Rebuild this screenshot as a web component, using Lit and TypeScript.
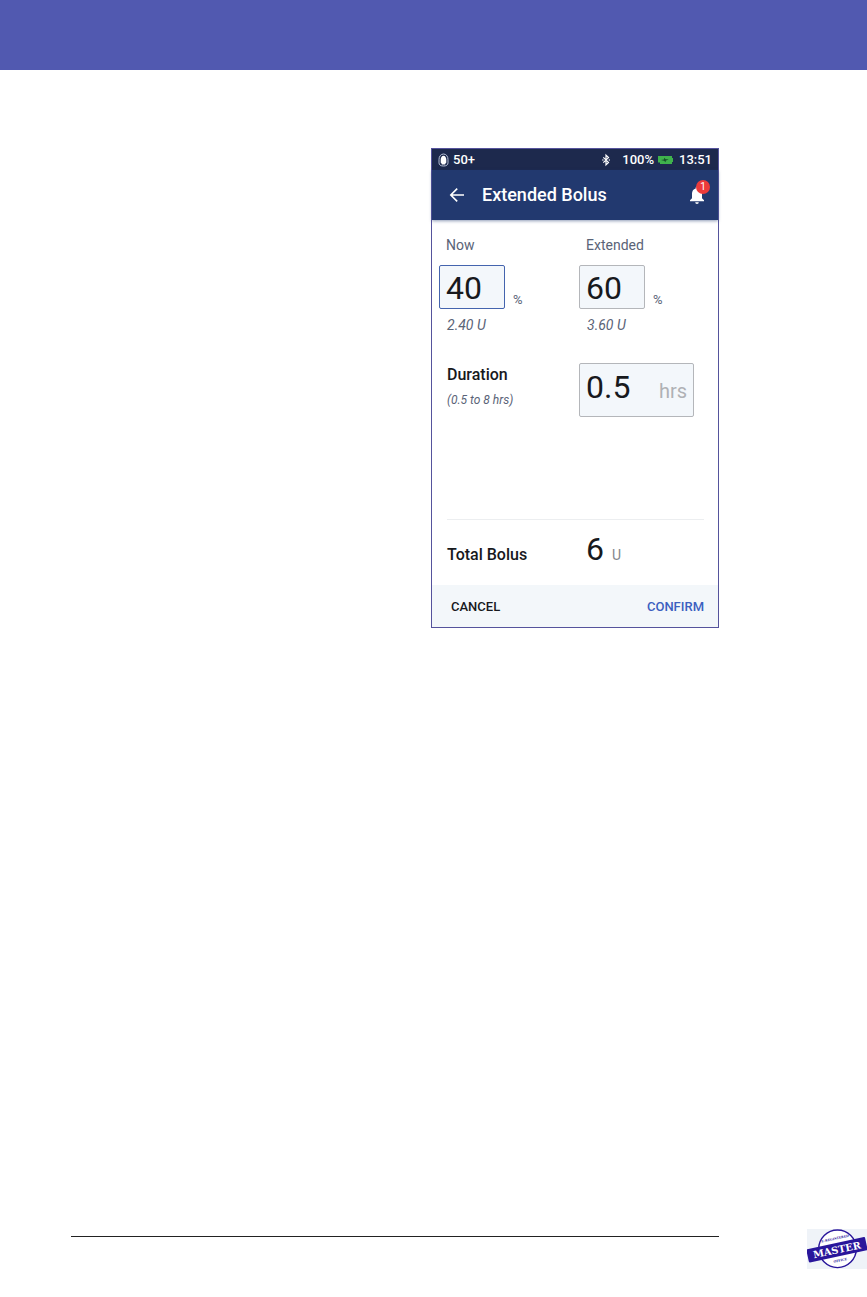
import { LitElement, html, css } from "lit";
import { customElement, property } from "lit/decorators.js";

@customElement("status-bar")
class StatusBar extends LitElement {
  static styles = css`
    :host {
      display: flex;
      align-items: center;
      height: 21px;
      padding: 0 6px;
      background: #1d294d;
      color: #fff;
      font-size: 13px;
      font-weight: 500;
      line-height: 20px;
    }
    .pod { width: 11px; height: 14px; margin-right: 4px; }
    .bluetooth { width: 10px; height: 14px; margin-left: auto; margin-right: 11px; }
    .battery { width: 16px; height: 8px; margin: 0 6px 0 3px; }
  `;
  render() {
    return html`
      <svg class="pod" viewBox="0 0 11 14" aria-hidden="true">
        <path d="M5.500 1C2.600 1 1 3.600 1 6.600v3.200C1 12 2.600 13 5.500 13S10 12 10 9.800V6.600C10 3.600 8.400 1 5.500 1Z" fill="none" stroke="#c9d2e6" stroke-width=".9"/>
        <path d="M5.500 2.700C3.700 2.700 2.700 4.600 2.700 6.600v2.700c0 .9.500 1.200 1.100 1.200v.9h3.400v-.9c.6 0 1.100-.3 1.100-1.200V6.600c0-2-1-3.900-2.800-3.900Z" fill="#fff"/>
      </svg>
      <span>50+</span>
      <svg class="bluetooth" viewBox="0 0 10 14" aria-hidden="true">
        <path d="M2.300 4.400 7.500 9.400 5 11.900V2.100l2.500 2.500-5.200 5" fill="none" stroke="#fff" stroke-width="1.200"/>
        <circle cx="1.900" cy="7" r=".7" fill="#fff"/><circle cx="8.300" cy="7" r=".7" fill="#fff"/>
      </svg>
      <span>100%</span>
      <svg class="battery" viewBox="0 0 16 8" aria-hidden="true">
        <path d="M1 0h14v2h1v4h-1v2H3V6.500H1Z" fill="#3fb24c"/>
        <path d="M4 4 7 3.400V1.800L8.700 3.200h3L8.700 4.800v1.500L7 4.800Z" fill="#17502a"/>
      </svg>
      <span>13:51</span>
    `;
  }
}

@customElement("title-bar")
class TitleBar extends LitElement {
  @property() heading = "";
  @property({ type: Number }) alerts = 0;
  static styles = css`
    :host {
      display: flex;
      align-items: center;
      height: 50px;
      padding: 0 7px 0 15px;
      background: #22396f;
      color: #fff;
      box-shadow: 0 1px 3px #22396f80;
      position: relative;
    }
    button {
      display: grid;
      place-items: center;
      border: 0;
      padding: 0;
      background: none;
      color: inherit;
      font: inherit;
    }
    .back { width: 20px; height: 20px; }
    .back svg { width: 16px; height: 16px; }
    h1 { margin: 0 auto 0 15px; font-size: 18px; font-weight: 500; line-height: 24px; }
    .bell { position: relative; width: 22px; height: 28px; }
    .bell svg { width: 16px; height: 20px; margin-right: 6px; }
    .badge {
      position: absolute;
      top: -1px;
      right: 1px;
      width: 14px;
      height: 14px;
      border-radius: 50%;
      background: #ec3b3b;
      font-size: 10px;
      line-height: 14px;
      text-align: center;
    }
  `;
  render() {
    return html`
      <button class="back" aria-label="Back">
        <svg viewBox="0 0 16 16" aria-hidden="true">
          <path d="M15 8H2M8.200 1.600 1.800 8l6.400 6.400" fill="none" stroke="#fff" stroke-width="1.600"/>
        </svg>
      </button>
      <h1>${this.heading}</h1>
      <button class="bell" aria-label="Notifications">
        <svg viewBox="0 0 16 20" aria-hidden="true">
          <path d="M8 1.500c-.8 0-1.300.6-1.300 1.300v.6C4.300 4 3 6 3 8.600v4.600L1 15.300v1h14v-1l-2-2.100V8.600C13 6 11.700 4 9.300 3.400v-.6C9.300 2.100 8.800 1.500 8 1.500ZM6.200 17.200a1.800 1.800 0 0 0 3.600 0Z" fill="#fff"/>
        </svg>
        <span class="badge">${this.alerts}</span>
      </button>
    `;
  }
}

@customElement("bolus-form")
class BolusForm extends LitElement {
  static styles = css`
    :host { display: flex; flex-direction: column; color: #17191d; }
    .entries {
      display: grid;
      grid-template-columns: 140px minmax(0, 1fr);
      row-gap: 28px;
      padding: 15px 24px 0 7px;
    }
    .share { display: flex; flex-direction: column; color: #5a6377; }
    .share label { padding-left: 7px; margin-bottom: 10px; font-size: 14px; line-height: 20px; }
    .entry { display: flex; align-items: flex-end; gap: 8px; font-size: 13px; line-height: 18px; }
    .box {
      box-sizing: border-box;
      border: 1px solid #b4b6ba;
      border-radius: 2px;
      background: #f3f7fb;
      color: #17191d;
      font: 400 32px/40px Roboto, sans-serif;
    }
    .percent { width: 66px; height: 44px; padding: 2px 6px 0; outline: none; }
    .active { border-color: #4464ae; }
    .amount { margin-top: 6px; padding-left: 8px; font-size: 14px; font-style: italic; line-height: 20px; }
    .caption { display: flex; flex-direction: column; padding-left: 8px; gap: 4px; }
    .strong { font-size: 16px; font-weight: 500; line-height: 24px; }
    .range { font-size: 12px; font-style: italic; line-height: 18px; color: #5a6377; }
    .duration { display: flex; align-items: baseline; height: 54px; padding: 3px 6px; }
    .duration input {
      flex: 1;
      min-width: 0;
      border: 0;
      padding: 0;
      height: 40px;
      background: none;
      color: inherit;
      font: inherit;
      outline: none;
    }
    .hours { color: #afb1b5; font-size: 20px; }
    .total {
      display: grid;
      grid-template-columns: 139px 1fr;
      align-items: baseline;
      margin: 102px 14px 0 15px;
      height: 65px;
      border-top: 1px solid #eceef0;
    }
    .sum { margin-right: 4px; font-size: 32px; line-height: 58px; }
    .unit { font-size: 14px; color: #84878d; }
    .actions {
      display: flex;
      align-items: center;
      justify-content: space-between;
      height: 42px;
      box-sizing: border-box;
      padding: 2px 14px 0 19px;
      background: #f3f7fa;
    }
    .actions button {
      border: 0;
      padding: 0;
      background: none;
      color: #17191d;
      font: 500 13px/20px Roboto, sans-serif;
    }
    .actions .confirm { color: #3c5fc0; }
  `;

  share(id: string, name: string, percent: string, amount: string, active = false) {
    return html`
      <div class="share">
        <label for=${id}>${name}</label>
        <div class="entry">
          <input id=${id} class="box percent ${active ? "active" : ""}" .value=${percent} inputmode="numeric" />
          <span>%</span>
        </div>
        <span class="amount">${amount}</span>
      </div>
    `;
  }

  render() {
    return html`
      <div class="entries">
        ${this.share("now", "Now", "40", "2.40 U", true)}
        ${this.share("extended", "Extended", "60", "3.60 U")}
        <div class="caption">
          <label class="strong" for="duration">Duration</label>
          <span class="range">(0.5 to 8 hrs)</span>
        </div>
        <div class="box duration">
          <input id="duration" value="0.5" inputmode="decimal" />
          <span class="hours">hrs</span>
        </div>
      </div>
      <div class="total">
        <span class="strong">Total Bolus</span>
        <span><span class="sum">6</span> <span class="unit">U</span></span>
      </div>
      <div class="actions">
        <button>CANCEL</button>
        <button class="confirm">CONFIRM</button>
      </div>
    `;
  }
}

@customElement("app-root")
class AppRoot extends LitElement {
  static styles = css`
    :host {
      display: flex;
      flex-direction: column;
      min-height: 100vh;
      background: #fff;
      font-family: Roboto, sans-serif;
    }
    .banner { height: 70px; background: #5159b0; }
    main { display: flex; justify-content: flex-end; padding: 78px 148px 40px 71px; }
    .device { box-sizing: border-box; width: 288px; border: 1px solid #55539c; }
    footer { display: flex; align-items: flex-start; margin-top: auto; padding: 0 0 28px 71px; }
    .rule { flex: 1; margin: 7px 88px 0 0; border: 0; border-top: 1px solid #222; }
    .stamp { width: 60px; height: 40px; background: #eff3f8; }
  `;
  render() {
    return html`
      <div class="banner"></div>
      <main>
        <section class="device">
          <status-bar></status-bar>
          <title-bar heading="Extended Bolus" .alerts=${1}></title-bar>
          <bolus-form></bolus-form>
        </section>
      </main>
      <footer>
        <hr class="rule" />
        <svg class="stamp" viewBox="0 0 60 40" role="img" aria-label="Master">
          <circle cx="30.500" cy="19.800" r="18.800" fill="#fff" stroke="#29169b" stroke-width="1.400"/>
          <g transform="rotate(-12 30 21)" fill="#29169b" text-anchor="middle" font-family="DejaVu Serif, serif" font-weight="700">
            <text x="30.500" y="10.500" font-size="3.200">E-REGISTERED</text>
            <rect x="0" y="14" width="60" height="13.500" rx="1"/>
            <text x="30" y="24.300" font-size="9.800" fill="#fff">MASTER</text>
            <text x="31" y="32.800" font-size="3.200">OFFICE</text>
          </g>
        </svg>
      </footer>
    `;
  }
}
